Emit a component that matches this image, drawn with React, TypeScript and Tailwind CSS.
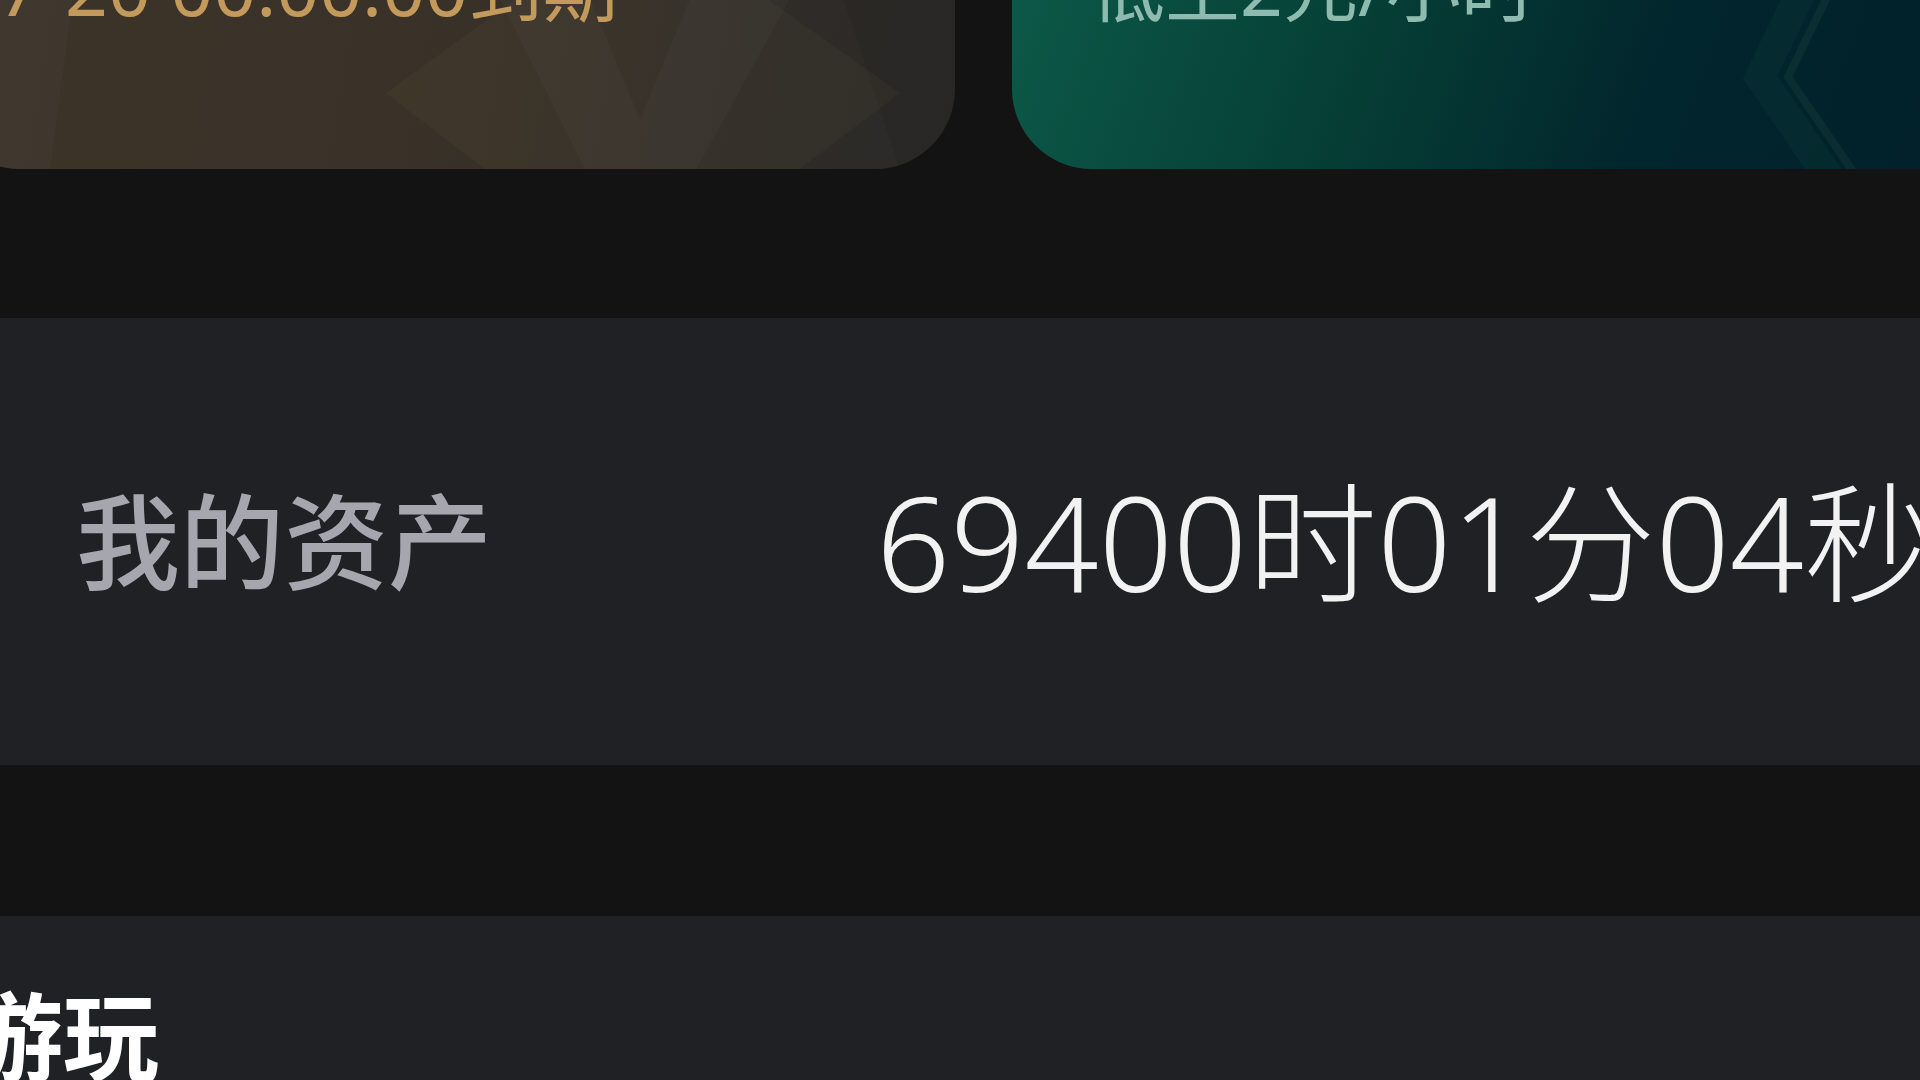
import React from 'react';

const cjk = 'font-["Noto_Sans","Noto_Sans_CJK_SC",sans-serif]';

function VipCard() {
  return (
    <div className="relative ml-[-60px] h-[300px] w-[1015px] shrink-0 overflow-hidden rounded-[80px] bg-[linear-gradient(100deg,#3c3429_0%,#3a3228_45%,#2f2c28_80%,#2b2a28_100%)]">
      <svg className="absolute inset-0" width="1015" height="300" viewBox="0 0 1015 300">
        <path d="M40 0 L150 0 L110 300 L0 300 Z" fill="rgba(255,255,255,0.025)" />
        <path d="M446 224 L700 40 L960 224 L700 420 Z" fill="rgba(180,150,90,0.05)" />
        <path d="M560 130 L650 130 L700 250 L750 130 L850 130 L740 330 L660 330 Z" fill="rgba(255,255,255,0.025)" />
        <path d="M860 0 L1015 0 L1015 300 L960 300 Z" fill="rgba(0,0,0,0.06)" />
      </svg>
      <div className="relative flex h-full flex-col pl-[58px] pt-[81px]">
        <span className={`${cjk} whitespace-nowrap text-[75px] leading-none text-[#c49a5c]`}>
          7-20 00:00:00到期
        </span>
      </div>
    </div>
  );
}

function PlanCard() {
  return (
    <div className="relative h-[300px] w-[1000px] shrink-0 overflow-hidden rounded-[80px] bg-[linear-gradient(110deg,#0d5c4a_0%,#064036_35%,#02262d_65%,#011f29_100%)]">
      <svg className="absolute inset-0" width="1000" height="300" viewBox="0 0 1000 300">
        <path d="M830 40 L748 208 L825 320" stroke="rgba(30,90,80,0.14)" strokeWidth="30" fill="none" />
        <path d="M858 40 L776 208 L853 320" stroke="rgba(50,100,80,0.18)" strokeWidth="8" fill="none" />
      </svg>
      <div className="relative flex h-full flex-col pl-[78px] pt-[81px]">
        <span className={`${cjk} whitespace-nowrap text-[75px] leading-none text-[#8fbab0]`}>
          低至2元/小时
        </span>
      </div>
    </div>
  );
}

export default function App() {
  return (
    <div className="flex h-[1080px] w-[1920px] flex-col overflow-hidden bg-[#131313]">
      <div className="flex h-[169px] shrink-0 items-end gap-[57px]">
        <VipCard />
        <PlanCard />
      </div>

      <div className="mt-[149px] flex h-[447px] shrink-0 items-center bg-[#202125] pl-[76px]">
        <span className={`${cjk} w-[800px] shrink-0 whitespace-nowrap text-[104px] font-medium leading-none text-[#a6a6ae]`}>
          我的资产
        </span>
        <span className={`${cjk} whitespace-nowrap text-[130px] font-light leading-none text-[#f2f2f2]`}>
          69400时01分04秒
        </span>
      </div>

      <div className="mt-[151px] flex flex-1 flex-col bg-[#202125] pt-[72px]">
        <span className={`${cjk} ml-[-33px] whitespace-nowrap text-[96px] font-bold leading-none text-white`}>
          游玩
        </span>
      </div>
    </div>
  );
}
